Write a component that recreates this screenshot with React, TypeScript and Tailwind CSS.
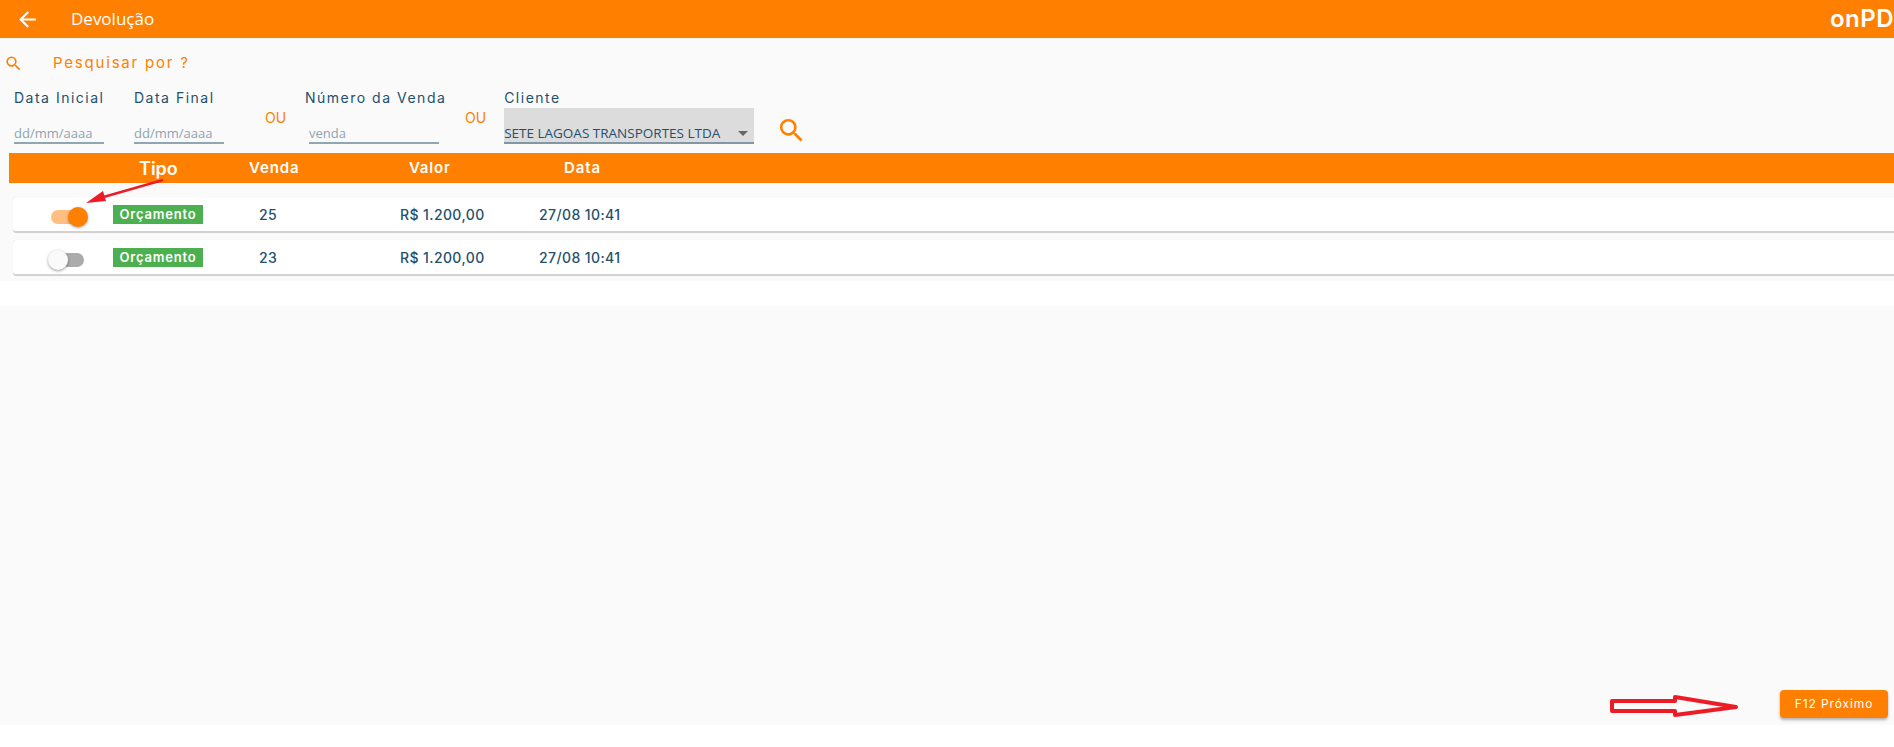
import { MdArrowBack, MdSearch } from "react-icons/md"

const rows = [
  { id: 25, on: true },
  { id: 23, on: false },
]

const heading = "font-['Inter','Liberation_Sans',sans-serif]"
const label = "h-[25px] text-[14px] leading-[30px] tracking-[1.5px] whitespace-nowrap text-[#23506e]"

function Field({ title, placeholder, width, inset }: { title: string; placeholder: string; width: string; inset?: boolean }) {
  return (
    <div className={width}>
      <p className={label}>{title}</p>
      <div
        className={`mt-[16px] h-[20px] border-b-2 border-[#8fa6b5] font-['Open_Sans',sans-serif] text-[13px] leading-[18px] text-[#8fa3b0] ${inset ? "ml-[4px]" : ""}`}
      >
        {placeholder}
      </div>
    </div>
  )
}

function Ou() {
  return <span className="mt-[25px] block text-[14px] leading-[20px] text-[#ff8000]">OU</span>
}

function Toggle({ on }: { on: boolean }) {
  if (on) {
    return (
      <div className="relative ml-[38px] h-[14px] w-[34px] rounded-full bg-[#ffbf80]">
        <span className="absolute top-[-3px] right-[-3px] size-[20px] rounded-full bg-[#ff8000] shadow-[0_1px_3px_rgba(0,0,0,0.35)]" />
      </div>
    )
  }
  return (
    <div className="relative ml-[38px] h-[14px] w-[33px] rounded-full bg-[#ababab]">
      <span className="absolute top-[-3px] left-[-3px] size-[20px] rounded-full bg-[#fafafa] shadow-[0_1px_3px_rgba(0,0,0,0.4)]" />
    </div>
  )
}

function Row({ id, on }: { id: number; on: boolean }) {
  return (
    <div className="ml-[13px] flex h-[36px] items-center rounded-l-[4px] border-b-2 border-[#d2d2d2] bg-white text-[14px] font-medium tracking-[0.4px] text-[#23506e] shadow-[0_0_1px_rgba(0,0,0,0.15)]">
      <div className="w-[100px] shrink-0 pt-[5px]">
        <Toggle on={on} />
      </div>
      <span className="mt-[1px] h-[19px] w-[90px] shrink-0 bg-[#4caf50] text-center text-[13px] leading-[19px] font-semibold tracking-[0.8px] text-white">
        Orçamento
      </span>
      <span className="ml-[56px] w-[141px] shrink-0">{id}</span>
      <span className="w-[139px] shrink-0 whitespace-nowrap">R$ 1.200,00</span>
      <span className="whitespace-nowrap">27/08 10:41</span>
    </div>
  )
}

export default function App() {
  return (
    <div className={`relative h-[747px] w-full overflow-hidden bg-white ${heading}`}>
      <header className="flex h-[38px] items-center bg-[#ff8000] text-white">
        <MdArrowBack className="ml-[15px] size-[25px] shrink-0" />
        <span className="ml-[31px] font-['Open_Sans',sans-serif] text-[17px]">Devolução</span>
        <span className="ml-auto text-[24px] leading-none font-semibold tracking-[0.5px] whitespace-nowrap">onPD</span>
      </header>

      <div className="h-[243px] bg-[#fafafa]">
        <div className="flex h-[45px] items-center pt-[5px] text-[#ff8000]">
          <MdSearch className="ml-[4px] size-[19px] shrink-0" />
          <span className="ml-[30px] pt-[1px] text-[15px] tracking-[1.8px]">Pesquisar por ?</span>
        </div>

        <div className="flex h-[70px] items-start">
          <div className="ml-[14px] flex items-start">
            <Field title="Data Inicial" placeholder="dd/mm/aaaa" width="w-[90px]" />
            <div className="ml-[30px]">
              <Field title="Data Final" placeholder="dd/mm/aaaa" width="w-[90px]" />
            </div>
            <div className="ml-[41px] w-[40px]">
              <Ou />
            </div>
            <div className="w-[160px]">
              <Field title="Número da Venda" placeholder="venda" width="w-[134px]" inset />
            </div>
            <Ou />
            <div className="ml-[18px] w-[250px]">
              <p className={label}>Cliente</p>
              <div className="flex h-[36px] items-end justify-between border-b-2 border-[#7f97a6] bg-[#dcdcdc] font-['Open_Sans',sans-serif] text-[13.5px] leading-[18px] whitespace-nowrap text-[#23506e]">
                <span>SETE LAGOAS TRANSPORTES LTDA</span>
                <span className="mr-[6px] mb-[6px] h-0 w-0 border-x-[5px] border-t-[5px] border-x-transparent border-t-[#666666]" />
              </div>
            </div>
            <MdSearch className="mt-[32px] ml-[22px] size-[31px] shrink-0 text-[#ff8000]" />
          </div>
        </div>

        <div className="ml-[9px] flex h-[30px] items-center bg-[#ff8000] font-semibold text-white">
          <span className="ml-[130px] w-[110px] shrink-0 text-[18px]">Tipo</span>
          <span className="w-[160px] shrink-0 text-[15px] tracking-[0.9px]">Venda</span>
          <span className="w-[155px] shrink-0 text-[15px] tracking-[0.8px]">Valor</span>
          <span className="text-[15px] tracking-[0.9px]">Data</span>
        </div>

        <div className="mt-[14px] flex flex-col gap-[7px]">
          {rows.map((r) => (
            <Row key={r.id} id={r.id} on={r.on} />
          ))}
        </div>
      </div>

      <div className="h-[25px] bg-white" />

      <div className="flex h-[419px] items-end justify-end bg-[#fafafa]">
        <button className="mr-[6px] mb-[7px] h-[28px] w-[108px] rounded-[4px] bg-[#ff8000] text-[12px] tracking-[0.9px] text-white shadow-[0_2px_3px_rgba(0,0,0,0.3)]">
          F12 Próximo
        </button>
      </div>

      {/* anotações em vermelho sobre o print */}
      <svg className="pointer-events-none absolute top-0 left-0" width="1894" height="747">
        <path d="M163 180 L100 198" stroke="#ed1c24" strokeWidth="2.5" fill="none" />
        <path d="M86 203 L103 191 L106 201 Z" fill="#ed1c24" />
        <path
          d="M1612 701 H1675 V697 L1736 707 L1675 715 V711 H1612 Z"
          stroke="#ed1c24"
          strokeWidth="4"
          strokeLinejoin="round"
          fill="none"
        />
      </svg>
    </div>
  )
}
